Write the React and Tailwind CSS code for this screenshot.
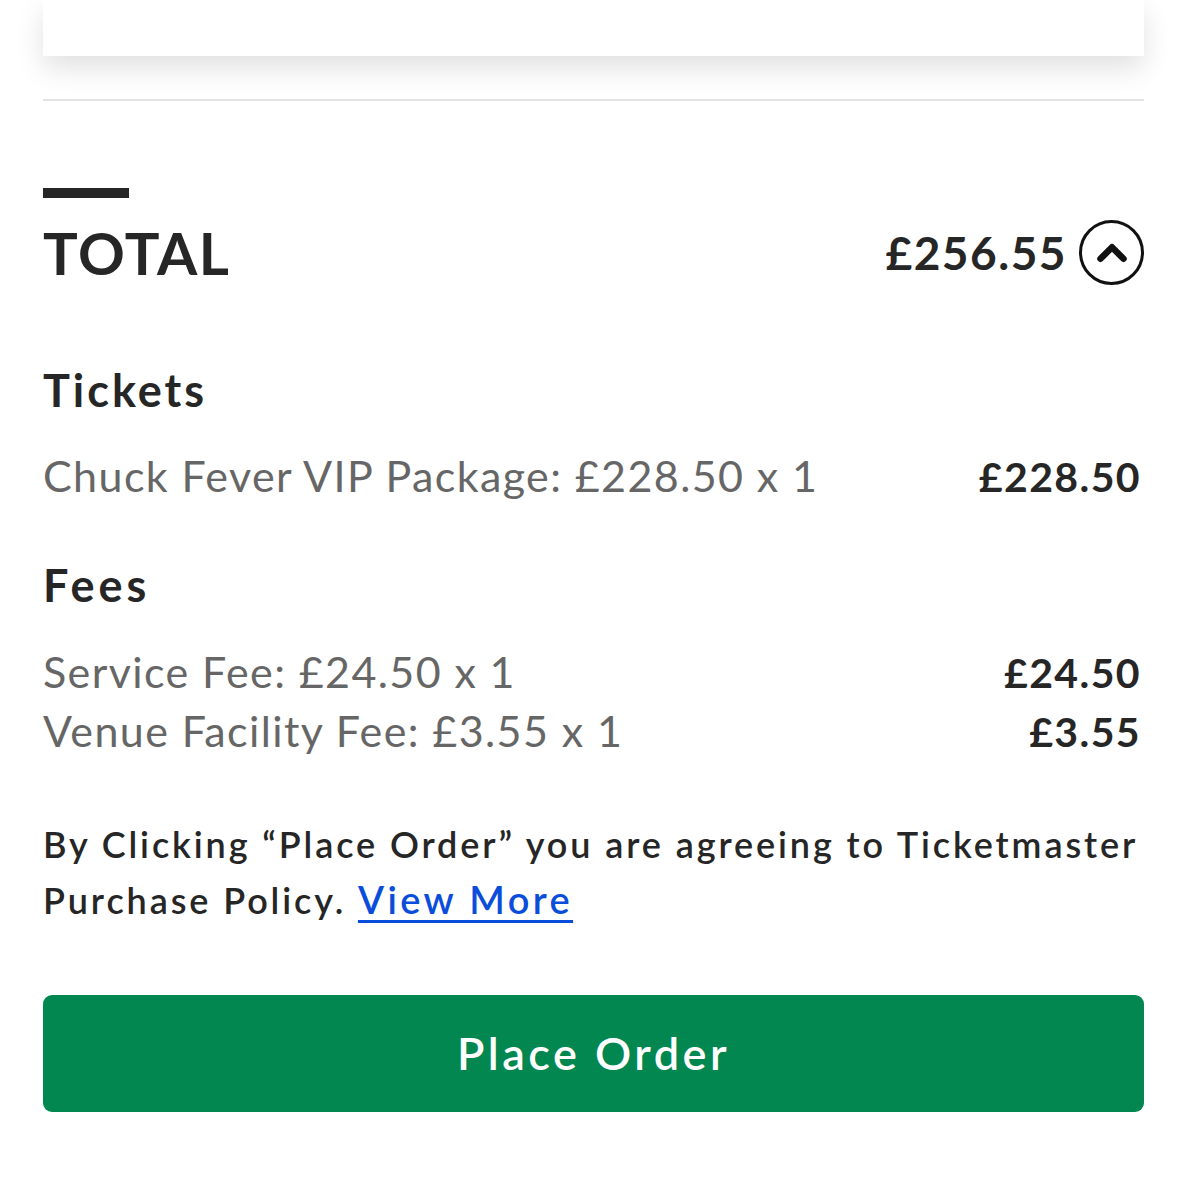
import { ChevronUp } from 'lucide-react';

const font = { fontFamily: 'Lato, "Open Sans", sans-serif' };

function LineItem({ label, amount }) {
  return (
    <div className="flex items-center justify-between h-[59px]">
      <span className="text-[43px] text-[#666666] tracking-[1.4px]">{label}</span>
      <span className="text-[41px] font-bold text-[#262626] tracking-[1.4px] pr-[3px]">{amount}</span>
    </div>
  );
}

export default function App() {
  return (
    <div className="bg-white w-[1187px] min-h-[1200px] px-[43px] overflow-hidden" style={font}>
      <div className="h-[56px] bg-white shadow-[0_12px_28px_rgba(0,0,0,0.12)]" />

      <div className="mt-[43px] h-[2px] bg-[#e4e4e4]" />

      <div className="mt-[87px] w-[86px] h-[10px] bg-[#262626]" />

      <div className="mt-[22px] flex items-center justify-between">
        <h1 className="text-[58px] font-bold text-[#262626] tracking-[1.5px] leading-none">TOTAL</h1>
        <div className="flex items-center gap-[12px]">
          <span className="text-[46px] font-bold text-[#262626] tracking-[1.5px] leading-none">£256.55</span>
          <button className="w-[65px] h-[65px] rounded-full border-[3px] border-[#111] flex items-center justify-center">
            <ChevronUp size={46} strokeWidth={3.4} color="#111" />
          </button>
        </div>
      </div>

      <h2 className="mt-[83px] text-[45px] font-bold text-[#262626] tracking-[3px] leading-none">Tickets</h2>
      <div className="mt-[34px]">
        <LineItem label="Chuck Fever VIP Package: £228.50 x 1" amount="£228.50" />
      </div>

      <h2 className="mt-[57px] text-[45px] font-bold text-[#262626] tracking-[4px] leading-none">Fees</h2>
      <div className="mt-[35px]">
        <LineItem label="Service Fee: £24.50 x 1" amount="£24.50" />
        <LineItem label="Venue Facility Fee: £3.55 x 1" amount="£3.55" />
      </div>

      <p className="mt-[55px] text-[36px] font-semibold text-[#262626] leading-[56px] tracking-[2.9px]">
        By Clicking “Place Order” you are agreeing to Ticketmaster Purchase Policy.{' '}
        <a href="#" className="text-[#0b4ddb] underline underline-offset-[6px] decoration-[3px] text-[38px] leading-none tracking-[3.4px]">View More</a>
      </p>

      <button className="mt-[67px] w-full h-[117px] rounded-[9px] bg-[#038750] text-white text-[45px] font-semibold tracking-[3.5px]">
        Place Order
      </button>
    </div>
  );
}
